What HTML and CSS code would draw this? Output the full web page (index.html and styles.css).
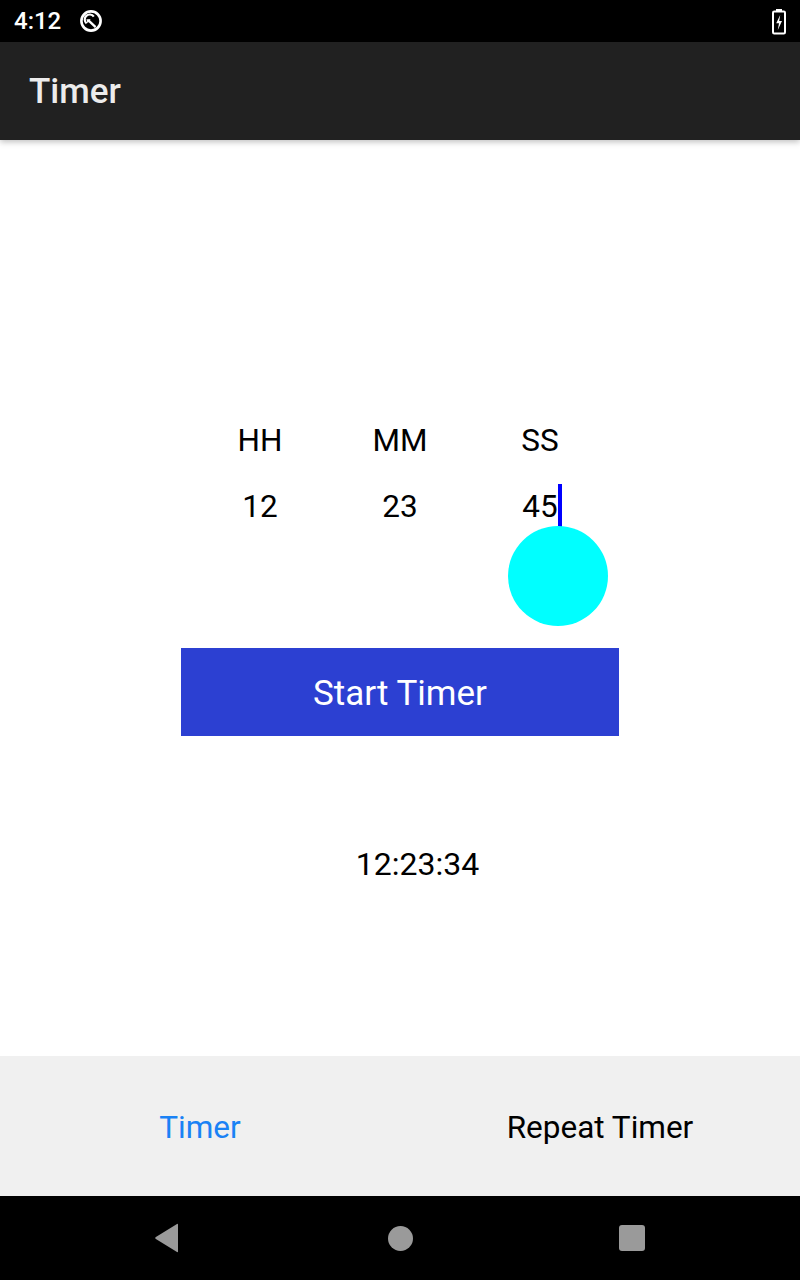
FILE: index.html
```html
<!DOCTYPE html>
<html>
<head>
<meta charset="utf-8">
<link rel="stylesheet" href="styles.css">
</head>
<body>
<div class="screen">
  <div class="status-bar">
    <div class="status-left">
      <span class="clock">4:12</span>
      <svg class="status-icon" width="26" height="26" viewBox="0 0 26 26">
        <circle cx="13" cy="13" r="9.6" fill="none" stroke="#fff" stroke-width="2.6"/>
        <path d="M8.6 15.4 A5 5 0 1 1 15.8 8.6" fill="none" stroke="#fff" stroke-width="2.2"/>
        <path d="M10.2 12.2 L17.6 19.2" stroke="#fff" stroke-width="2.3" stroke-linecap="butt"/>
        <path d="M8.4 11.2 L12.6 11.2 L9.6 15.2 Z" fill="#fff"/>
      </svg>
    </div>
    <svg class="battery" width="16" height="28" viewBox="0 0 16 28">
      <rect x="5" y="1" width="6" height="3" fill="#fff"/>
      <rect x="2" y="3.5" width="12" height="22" rx="1.2" fill="none" stroke="#fff" stroke-width="2"/>
      <path d="M9.2 7 L5.2 15.2 L8 15.2 L6.8 22 L11 13 L8.2 13 Z" fill="#fff"/>
    </svg>
  </div>
  <header class="app-bar">
    <h1 class="app-title">Timer</h1>
  </header>
  <main class="content">
    <div class="time-grid">
      <div class="label">HH</div>
      <div class="label">MM</div>
      <div class="label">SS</div>
      <div class="value">12</div>
      <div class="value">23</div>
      <div class="value value-active">45<span class="cursor"></span><span class="handle"></span></div>
    </div>
    <button class="start-btn">Start Timer</button>
    <div class="countdown">12:23:34</div>
  </main>
  <nav class="tabs">
    <div class="tab tab-active">Timer</div>
    <div class="tab">Repeat Timer</div>
  </nav>
  <div class="nav-bar">
    <svg width="26" height="30" viewBox="0 0 26 30"><path d="M24 1.5 L24 28.5 Q24 29.5 23 29 L1.5 15.8 Q1 15 1.5 14.2 L23 1 Q24 0.5 24 1.5 Z" fill="#9a9a9a"/></svg>
    <span class="home-dot"></span>
    <span class="recent-sq"></span>
  </div>
</div>
</body>
</html>
```

FILE: styles.css
```css
* { box-sizing: border-box; margin: 0; padding: 0; }

html, body {
  width: 800px;
  height: 1280px;
  background: #fff;
  overflow: hidden;
}

body {
  font-family: Roboto, "Liberation Sans", sans-serif;
}

.screen {
  width: 800px;
  height: 1280px;
  display: flex;
  flex-direction: column;
}

.status-bar {
  height: 42px;
  background: #000;
  display: flex;
  align-items: center;
  justify-content: space-between;
  padding: 0 13px 0 14px;
  flex-shrink: 0;
}

.status-left {
  display: flex;
  align-items: center;
  gap: 17px;
}

.clock {
  color: #fff;
  font-size: 24px;
  font-weight: 500;
  line-height: 42px;
}

.status-icon { display: block; }

.battery { display: block; margin-top: 2px; }

.app-bar {
  height: 98px;
  background: #212121;
  display: flex;
  align-items: center;
  padding: 2px 0 0 29px;
  position: relative;
  z-index: 2;
  box-shadow: 0 2px 6px rgba(0, 0, 0, 0.25);
  flex-shrink: 0;
}

.app-title {
  color: #ececec;
  font-size: 35px;
  font-weight: 500;
  line-height: 40px;
}

.content {
  flex: 1;
  display: flex;
  flex-direction: column;
  align-items: center;
  padding-top: 281px;
}

.time-grid {
  display: grid;
  grid-template-columns: 140px 140px 140px;
  grid-auto-rows: 40px;
  row-gap: 26px;
}

.label, .value {
  font-size: 31.5px;
  line-height: 40px;
  text-align: center;
  color: #000;
}

.value-active { position: relative; }

.cursor {
  position: absolute;
  left: 88px;
  top: -3px;
  width: 3.5px;
  height: 43px;
  background: #0000ff;
}

.handle {
  position: absolute;
  left: 38px;
  top: 39px;
  width: 100px;
  height: 100px;
  border-radius: 50%;
  background: #00ffff;
}

.start-btn {
  margin-top: 121px;
  width: 438px;
  height: 88px;
  background: #2c40d2;
  color: #fff;
  border: none;
  font-family: Roboto, "Liberation Sans", sans-serif;
  font-size: 35px;
  line-height: 40px;
  padding-top: 4px;
}

.countdown {
  margin-top: 108px;
  margin-left: 35px;
  font-size: 32px;
  line-height: 40px;
  color: #000;
}

.tabs {
  height: 140px;
  background: #f0f0f0;
  display: flex;
  flex-shrink: 0;
}

.tab {
  flex: 1;
  display: flex;
  align-items: center;
  justify-content: center;
  font-size: 31.5px;
  line-height: 40px;
  padding-top: 4px;
  color: #000;
}

.tab-active { color: #1a82f5; }

.nav-bar {
  height: 84px;
  background: #000;
  display: flex;
  align-items: center;
  flex-shrink: 0;
  padding-left: 154px;
}

.nav-bar svg { display: block; margin-top: -1px; }

.home-dot {
  width: 25px;
  height: 25px;
  border-radius: 50%;
  background: #9a9a9a;
  margin-left: 208px;
}

.recent-sq {
  width: 26px;
  height: 26px;
  border-radius: 3px;
  background: #9a9a9a;
  margin-left: 206px;
}
```
